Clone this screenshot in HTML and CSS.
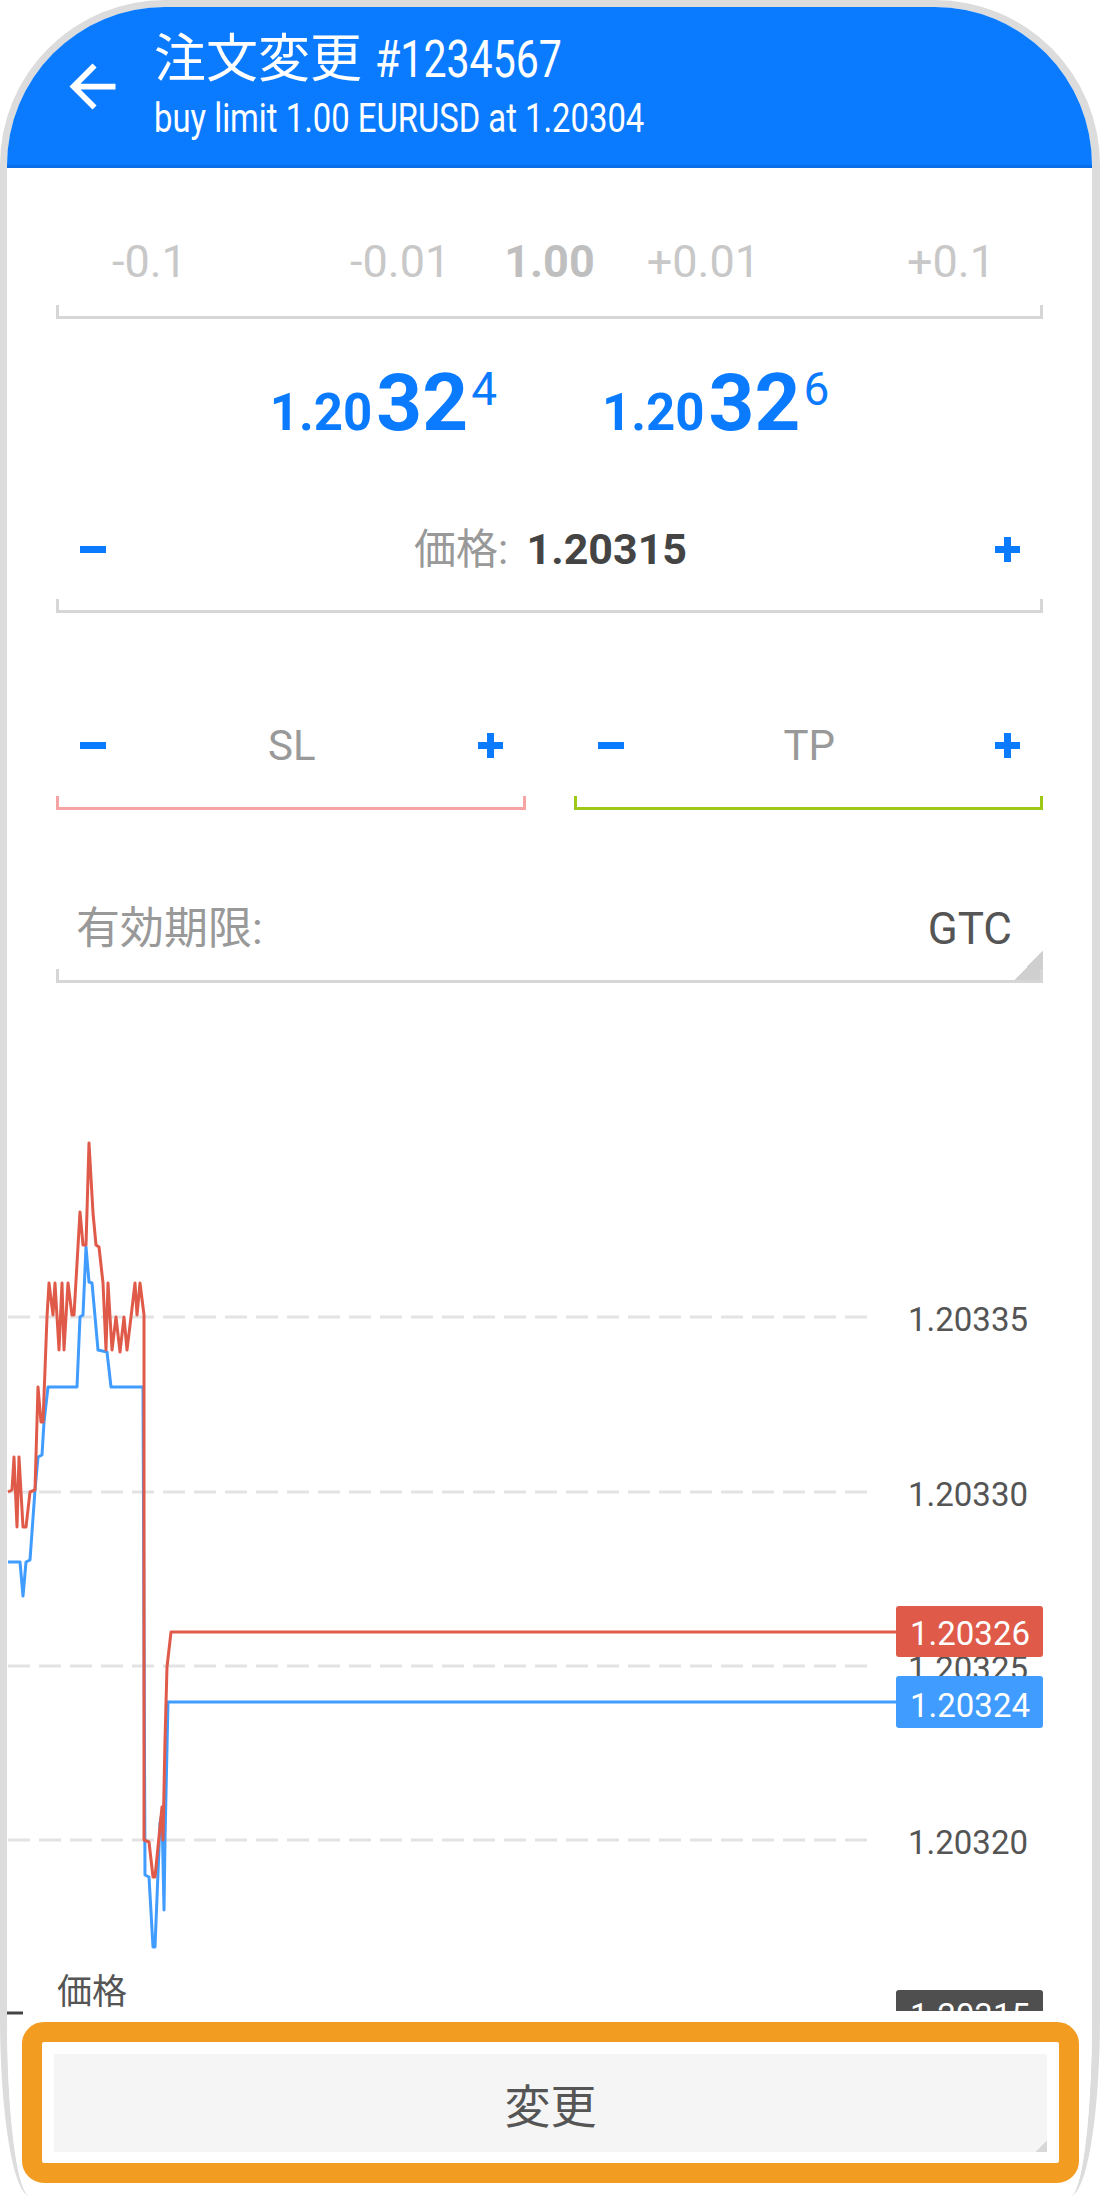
FILE: index.html
```html
<!DOCTYPE html>
<html lang="ja">
<head>
    <meta charset="UTF-8">
    <meta name="viewport" content="width=device-width, initial-scale=1.0">
    <title>注文変更 #1234567</title>
    <link rel="stylesheet" href="styles.css">
</head>
<body>
    <div class="phone">
        <header class="topbar">
            <svg class="back" viewBox="0 0 24 24" width="69" height="69">
                <path d="M20 11H7.83l5.59-5.59L12 4l-8 8 8 8 1.41-1.41L7.83 13H20v-2z"/>
            </svg>
            <div class="heading">
                <div class="title">注文変更 <span class="narrow">#1234567</span></div>
                <div class="subtitle"><span class="narrow">buy limit 1.00 EURUSD at 1.20304</span></div>
            </div>
        </header>

        <main class="form">
            <!-- Volume -->
            <div class="field first">
                <div class="lots">
                    <div class="lots-left"><span>-0.1</span><span>-0.01</span></div>
                    <span class="lots-main">1.00</span>
                    <div class="lots-right"><span>+0.01</span><span>+0.1</span></div>
                </div>
                <div class="line"></div>
            </div>

            <!-- Bid / Ask -->
            <div class="quotes">
                <div class="quote"><span>1.20</span><span class="q-big">32</span><span class="q-pip">4</span></div>
                <div class="quote"><span>1.20</span><span class="q-big">32</span><span class="q-pip">6</span></div>
            </div>

            <!-- Price -->
            <div class="field">
                <div class="stepper price-row">
                    <span class="minus"></span>
                    <span class="price-label">価格: <b>1.20315</b></span>
                    <span class="plus"></span>
                </div>
                <div class="line"></div>
            </div>

            <!-- SL / TP -->
            <div class="pair">
                <div class="field">
                    <div class="stepper sltp-row">
                        <span class="minus"></span>
                        <span class="sltp-label">SL</span>
                        <span class="plus"></span>
                    </div>
                    <div class="line line-sl"></div>
                </div>
                <div class="field">
                    <div class="stepper sltp-row">
                        <span class="minus"></span>
                        <span class="sltp-label">TP</span>
                        <span class="plus"></span>
                    </div>
                    <div class="line line-tp"></div>
                </div>
            </div>

            <!-- Expiration -->
            <div class="field expiry">
                <div class="expiry-row">
                    <span class="expiry-label">有効期限:</span>
                    <span class="expiry-value">GTC</span>
                </div>
                <div class="line"></div>
            </div>
        </main>

        <svg class="chart" width="1085" height="1032" viewBox="7 983 1085 1032">
            <defs>
                <clipPath id="chartCut"><rect x="0" y="983" width="1100" height="1028"/></clipPath>
            </defs>
            <g class="grid">
                <line x1="8" y1="1317" x2="872" y2="1317"/>
                <line x1="8" y1="1492" x2="872" y2="1492"/>
                <line x1="8" y1="1666" x2="872" y2="1666"/>
                <line x1="8" y1="1840" x2="872" y2="1840"/>
            </g>
            <g class="axis">
                <text x="908" y="1331">1.20335</text>
                <text x="908" y="1506">1.20330</text>
                <text x="908" y="1680">1.20325</text>
                <text x="908" y="1854">1.20320</text>
            </g>
            <polyline class="bid" points="8,1562 20,1562 23,1596 26,1562 30,1560 35,1490 38,1457 42,1455 44,1422 48,1387 77,1387 80,1317 83,1315 86,1247 89,1282 92,1283 98,1350 107,1352 111,1387 143,1387 145,1875 149,1877 153,1947 155,1947 160,1823 162,1813 164,1910 165,1840 168,1702 896,1702"/>
            <polyline class="ask" points="8,1492 12,1490 14,1457 17,1527 19,1457 23,1527 26,1527 30,1492 35,1490 38,1387 41,1422 43,1422 47,1317 49,1283 53,1315 55,1283 59,1350 62,1283 64,1350 68,1283 72,1315 74,1315 80,1212 83,1245 86,1245 89,1143 93,1213 96,1245 99,1247 103,1283 106,1350 108,1283 112,1350 116,1317 120,1352 124,1317 127,1350 131,1317 135,1283 137,1315 140,1283 144,1315 144,1840 149,1842 153,1877 155,1877 162,1807 163,1840 165,1740 167,1667 171,1632 896,1632"/>
            <rect class="tag-ask" x="896" y="1606" width="147" height="51" rx="3"/>
            <text class="tag-text" x="910" y="1645">1.20326</text>
            <rect class="tag-bid" x="896" y="1676" width="147" height="52" rx="3"/>
            <text class="tag-text" x="910" y="1717">1.20324</text>
            <g clip-path="url(#chartCut)">
                <rect class="tag-order" x="896" y="1990" width="147" height="50" rx="3"/>
                <text class="tag-text" x="910" y="2027">1.20315</text>
            </g>
            <line class="order-line" x1="7" y1="2013" x2="23" y2="2013"/>
            <text class="chart-title" x="57" y="2004">価格</text>
        </svg>

        <div class="footer">
            <div class="highlight">
                <button class="submit" type="button">変更</button>
            </div>
        </div>
    </div>
</body>
</html>
```

FILE: styles.css
```css
body {
    margin: 0;
    background: #fff;
    font-family: Roboto, "Noto Sans CJK JP", sans-serif;
}

.phone {
    box-sizing: border-box;
    width: 1100px;
    height: 2196px;
    border: 7px solid #dcdcdc;
    border-right-width: 8px;
    border-bottom: 0;
    border-radius: 165px 165px 30px 30px / 165px 165px 180px 180px;
    overflow: hidden;
    background: #fff;
}

/* Header */
.topbar {
    height: 158px;
    background: #0a7bff;
    border-bottom: 3px solid #0a6fe6;
    display: flex;
    align-items: center;
    padding-left: 51px;
    color: #fff;
}

.back {
    fill: #fff;
    flex-shrink: 0;
}

.heading {
    margin-left: 27px;
    white-space: nowrap;
}

.title {
    font-size: 52px;
    line-height: 52px;
}

.subtitle {
    font-size: 40px;
    line-height: 40px;
    margin-top: 13px;
}

.narrow {
    display: inline-block;
    transform: scaleX(0.79);
    transform-origin: left center;
}

.subtitle .narrow {
    transform: scaleX(0.82);
}

/* Form */
.form {
    padding: 0 49px;
}

.field.first {
    margin-top: 49px;
}

.line {
    height: 11px;
    border: 3px solid #d6d6d6;
    border-top: 0;
}

.line-sl {
    border-color: #f5a3a3;
}

.line-tp {
    border-color: #9dc816;
}

.lots {
    display: grid;
    grid-template-columns: 1fr auto 1fr;
    align-items: center;
    height: 88px;
    font-size: 45px;
    line-height: 1;
    color: #c8c8c8;
}

.lots-left {
    display: flex;
    justify-content: space-between;
    padding: 0 54px 0 56px;
}

.lots-right {
    display: flex;
    justify-content: space-between;
    padding: 0 48px 0 52px;
}

.lots-main {
    font-weight: bold;
    color: #bfbfbf;
}

.quotes {
    box-sizing: border-box;
    height: 181px;
    padding-top: 44px;
    display: flex;
    justify-content: center;
    gap: 105px;
}

.quote {
    font-size: 51px;
    line-height: 1;
    font-weight: bold;
    color: #0a7bff;
    white-space: nowrap;
}

.q-big {
    font-size: 80px;
    margin-left: 4px;
}

.q-pip {
    font-size: 46px;
    font-weight: normal;
    vertical-align: 25px;
    margin-left: 3px;
}

.stepper {
    display: flex;
    align-items: center;
    justify-content: space-between;
    padding: 0 23px 0 24px;
    line-height: 1;
}

.price-row {
    height: 99px;
}

.sltp-row {
    height: 101px;
}

.minus {
    width: 26px;
    height: 7px;
    background: #0a7bff;
}

.plus {
    width: 25px;
    height: 25px;
    background:
        linear-gradient(#0a7bff, #0a7bff) center / 25px 7px no-repeat,
        linear-gradient(#0a7bff, #0a7bff) center / 7px 25px no-repeat;
}

.price-label {
    font-size: 42px;
    color: #999;
}

.price-label b {
    font-size: 43px;
    color: #444;
    margin-left: 8px;
}

.pair {
    display: grid;
    grid-template-columns: 1fr 1fr;
    gap: 48px;
    margin-top: 82px;
}

.sltp-label {
    font-size: 42px;
    color: #999;
}

.expiry {
    margin-top: 79px;
    background: linear-gradient(to bottom right, transparent 50%, #cfcfcf 50%) right bottom / 31px 33px no-repeat;
}

.expiry-row {
    display: flex;
    align-items: center;
    height: 80px;
    padding: 0 31px 0 20px;
    font-size: 44px;
    line-height: 1;
    color: #999;
}

.expiry-label {
    flex: 1;
}

.expiry-value {
    color: #555;
}

/* Chart */
.chart {
    display: block;
}

.grid line {
    stroke: #e3e3e3;
    stroke-width: 3;
    stroke-dasharray: 22 9;
}

.axis text {
    font-family: Roboto, sans-serif;
    font-size: 33px;
    fill: #555;
}

.bid, .ask {
    fill: none;
    stroke-width: 3;
    stroke-linejoin: round;
}

.bid {
    stroke: #409cff;
}

.ask {
    stroke: #e05a4a;
}

.tag-ask {
    fill: #e05a4a;
}

.tag-bid {
    fill: #409cff;
}

.tag-order {
    fill: #4f4f4f;
}

.tag-text {
    font-family: Roboto, sans-serif;
    font-size: 33px;
    fill: #fff;
}

.order-line {
    stroke: #444;
    stroke-width: 3;
}

.chart-title {
    font-family: "Noto Sans CJK JP", sans-serif;
    font-size: 35px;
    fill: #555;
}

/* Bottom button */
.footer {
    padding: 7px 13px 13px 15px;
    background: #fff;
}

.highlight {
    border: 20px solid #f39c22;
    border-radius: 22px;
    padding: 12px 12px 11px;
    background: #fff;
}

.submit {
    display: block;
    width: 100%;
    height: 98px;
    border: 0;
    padding: 0;
    background: linear-gradient(to bottom right, transparent 50%, #d8d8d8 50%) right bottom / 12px 12px no-repeat, #f5f5f5;
    font-family: Roboto, "Noto Sans CJK JP", sans-serif;
    font-size: 46px;
    color: #555;
}
```
